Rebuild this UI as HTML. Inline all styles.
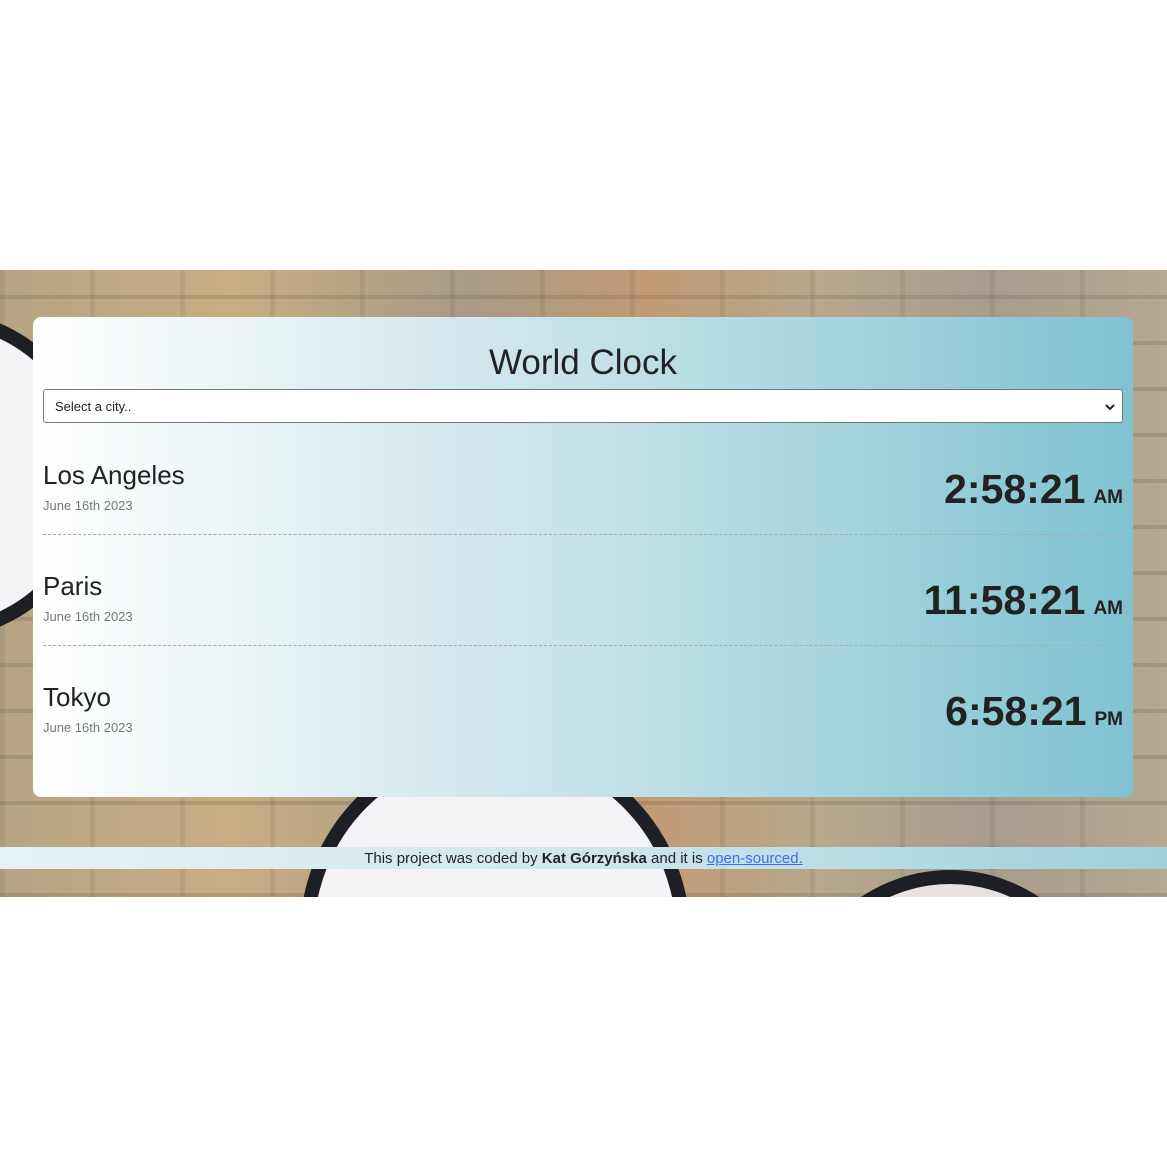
<!DOCTYPE html>
<html><head><meta charset="utf-8"><style>
*{margin:0;padding:0;box-sizing:border-box}
body{width:1167px;height:1167px;background:#fff;font-family:"Liberation Sans","DejaVu Sans",sans-serif;position:relative;overflow:hidden}
.bg{position:absolute;left:0;top:270px;width:1167px;height:627px;overflow:hidden;
background:
repeating-linear-gradient(0deg,rgba(80,70,60,.18) 0 4px,transparent 4px 46px),
repeating-linear-gradient(90deg,rgba(90,80,70,.12) 0 5px,transparent 5px 90px),
linear-gradient(90deg,#b7a485,#c9ad83 20%,#a99a86 40%,#c19a74 55%,#b9a88c 70%,#a89c8e 85%,#b7a890);}
.clk{position:absolute;border-radius:50%;background:#f4f4f6;border:14px solid #1d1f25}
.card{position:absolute;left:33px;top:317px;width:1100px;height:480px;border-radius:8px;background:linear-gradient(90deg,#fff 0%,#e3f0f3 25%,#bfe0e6 55%,#7fc2d2 100%)}
h1{position:absolute;left:0;width:100%;top:26px;text-align:center;font-size:35px;font-weight:400;color:#222}
.sel{position:absolute;left:10px;top:72px;width:1080px;height:34px;background:#fff;border:1px solid #777;border-radius:3px;font-size:13px;padding:9px 11px;color:#222}
.sel svg{position:absolute;right:6px;top:11px}
.row{position:absolute;left:10px;width:1080px;height:111px}
.row .c{position:absolute;left:0;top:0;font-size:26px;color:#222}
.row .d{position:absolute;left:0;top:38px;font-size:13px;color:#777}
.row .t{position:absolute;right:0;top:6px;font-size:41px;font-weight:bold;color:#222}
.row .t span{font-size:19px;margin-left:8px}
.line{position:absolute;left:10px;width:1080px;border-top:1px dashed #aaa}
.foot{position:absolute;left:0;top:847px;width:1167px;height:22px;background:linear-gradient(90deg,#e6f2f5,#cfe7ec 50%,#9ed0dc);text-align:center;font-size:15px;line-height:24px;color:#222}
.foot a{color:#3b6ef5;text-decoration:underline}
</style></head><body>
<div class="bg">
<div class="clk" style="left:-230px;top:40px;width:330px;height:330px"></div>
<div class="clk" style="left:300px;top:470px;width:390px;height:390px"></div>
<div class="clk" style="left:790px;top:600px;width:320px;height:320px;background:#e8e2e0"></div>
</div>
<div class="card">
<h1>World Clock</h1>
<div class="sel">Select a city..<svg width="12" height="12" viewBox="0 0 12 12"><path d="M2 4l4 4 4-4" stroke="#222" stroke-width="2" fill="none"/></svg></div>
<div class="row" style="top:143px"><div class="c">Los Angeles</div><div class="d">June 16th 2023</div><div class="t">2:58:21<span>AM</span></div></div>
<div class="line" style="top:217px"></div>
<div class="row" style="top:254px"><div class="c">Paris</div><div class="d">June 16th 2023</div><div class="t">11:58:21<span>AM</span></div></div>
<div class="line" style="top:328px"></div>
<div class="row" style="top:365px"><div class="c">Tokyo</div><div class="d">June 16th 2023</div><div class="t">6:58:21<span>PM</span></div></div>
</div>
<div class="foot">This project was coded by <b>Kat Górzyńska</b> and it is <a>open-sourced.</a></div>
</body></html>
